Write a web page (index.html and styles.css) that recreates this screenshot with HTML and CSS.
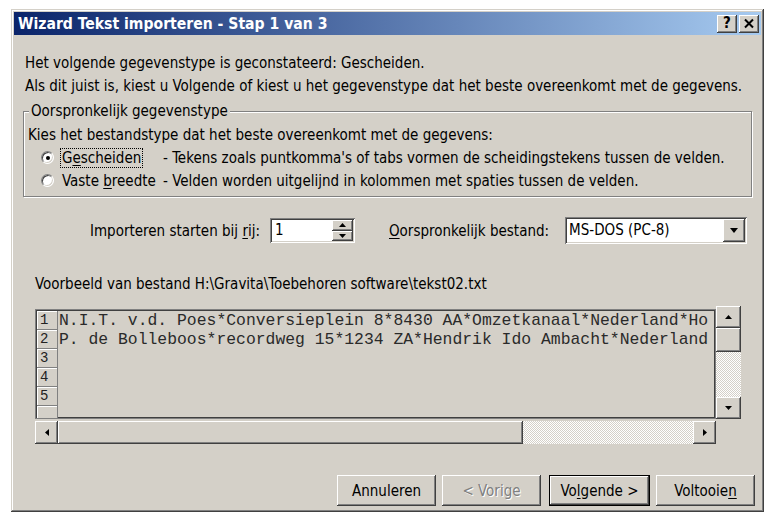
FILE: index.html
```html
<!DOCTYPE html>
<html lang="nl">
<head>
<meta charset="utf-8">
<title>Wizard Tekst importeren - Stap 1 van 3</title>
<link rel="stylesheet" href="styles.css">
</head>
<body>
<div class="window">
  <div class="titlebar">
    <span class="title">Wizard Tekst importeren - Stap 1 van 3</span>
    <div class="caption-btns">
      <button class="cap raised"><span class="cap-help">?</span></button>
      <button class="cap raised">
        <svg width="12" height="11" viewBox="0 0 12 11"><path d="M2 1.5 L10 9.5 M10 1.5 L2 9.5" stroke="#000" stroke-width="2" fill="none"/></svg>
      </button>
    </div>
  </div>

  <div class="content">
    <p class="intro first">Het volgende gegevenstype is geconstateerd: Gescheiden.</p>
    <p class="intro">Als dit juist is, kiest u Volgende of kiest u het gegevenstype dat het beste overeenkomt met de gegevens.</p>

    <fieldset class="group">
      <legend>Oorspronkelijk gegevenstype</legend>
      <div class="hint">Kies het bestandstype dat het beste overeenkomt met de gegevens:</div>
      <div class="choice">
        <span class="radio checked"></span>
        <span class="choice-label"><span class="focus">G<u>e</u>scheiden</span></span>
        <span class="choice-desc">- Tekens zoals puntkomma's of tabs vormen de scheidingstekens tussen de velden.</span>
      </div>
      <div class="choice">
        <span class="radio"></span>
        <span class="choice-label"><span class="nofocus">Vaste <u>b</u>reedte</span></span>
        <span class="choice-desc">- Velden worden uitgelijnd in kolommen met spaties tussen de velden.</span>
      </div>
    </fieldset>

    <div class="import-row">
      <span class="field-label">Importeren starten bij <u>r</u>ij:</span>
      <div class="spin sunken">
        <span class="spin-value">1</span>
        <div class="spin-btns">
          <span class="spin-btn raised"><svg width="7" height="4" viewBox="0 0 7 4"><path d="M3.5 0 L7 4 L0 4 Z" fill="#000"/></svg></span>
          <span class="spin-btn raised"><svg width="7" height="4" viewBox="0 0 7 4"><path d="M0 0 L7 0 L3.5 4 Z" fill="#000"/></svg></span>
        </div>
      </div>
      <span class="field-label origin"><u>O</u>orspronkelijk bestand:</span>
      <div class="combo sunken">
        <span class="combo-text">MS-DOS (PC-8)</span>
        <span class="combo-btn raised"><svg width="8" height="5" viewBox="0 0 8 5"><path d="M0 0 L8 0 L4 5 Z" fill="#000"/></svg></span>
      </div>
    </div>

    <div class="preview-label">Voorbeeld van bestand H:\Gravita\Toebehoren software\tekst02.txt</div>

    <div class="preview">
      <div class="sheet">
        <div class="sheet-row"><span class="rownum">1</span><span class="rowtext">N.I.T. v.d. Poes*Conversieplein 8*8430 AA*Omzetkanaal*Nederland*Ho</span></div>
        <div class="sheet-row"><span class="rownum">2</span><span class="rowtext">P. de Bolleboos*recordweg 15*1234 ZA*Hendrik Ido Ambacht*Nederland</span></div>
        <div class="sheet-row"><span class="rownum">3</span><span class="rowtext"></span></div>
        <div class="sheet-row"><span class="rownum">4</span><span class="rowtext"></span></div>
        <div class="sheet-row"><span class="rownum">5</span><span class="rowtext"></span></div>
        <div class="sheet-row"><span class="rownum"></span><span class="rowtext"></span></div>
      </div>

      <div class="vscroll">
        <span class="sb-btn raised"><svg width="7" height="4" viewBox="0 0 7 4"><path d="M3.5 0 L7 4 L0 4 Z" fill="#000"/></svg></span>
        <span class="sb-thumb-v raised"></span>
        <span class="sb-track"></span>
        <span class="sb-btn raised"><svg width="7" height="4" viewBox="0 0 7 4"><path d="M0 0 L7 0 L3.5 4 Z" fill="#000"/></svg></span>
      </div>

      <div class="hscroll">
        <span class="sb-btn-h raised"><svg width="4" height="7" viewBox="0 0 4 7"><path d="M4 0 L4 7 L0 3.5 Z" fill="#000"/></svg></span>
        <span class="sb-thumb-h raised"></span>
        <span class="sb-track"></span>
        <span class="sb-btn-h raised"><svg width="4" height="7" viewBox="0 0 4 7"><path d="M0 0 L4 3.5 L0 7 Z" fill="#000"/></svg></span>
      </div>
    </div>

    <div class="actions">
      <button class="btn raised">Annuleren</button>
      <button class="btn raised disabled">&lt; Vorige</button>
      <button class="btn raised default">Vo<u>l</u>gende &gt;</button>
      <button class="btn raised">Voltooie<u>n</u></button>
    </div>
  </div>
</div>
</body>
</html>
```

FILE: styles.css
```css
* {
  box-sizing: border-box;
}

html,
body {
  margin: 0;
  background: #fff;
}

body {
  font-family: "DejaVu Sans Condensed", "DejaVu Sans", sans-serif;
  font-stretch: condensed;
  font-size: 15px;
  color: #000;
}

u {
  text-decoration-thickness: 1px;
  text-underline-offset: 2px;
}

/* 3D bevels of the classic theme */
.raised {
  background: #d4d0c8;
  box-shadow: inset -1px -1px #404040, inset 1px 1px #fff,
    inset -2px -2px #808080, inset 2px 2px #d4d0c8;
}

.sunken {
  background: #fff;
  box-shadow: inset 1px 1px #808080, inset -1px -1px #fff,
    inset 2px 2px #404040, inset -2px -2px #d4d0c8;
}

button {
  font: inherit;
  color: inherit;
  border: 0;
  padding: 0;
  margin: 0;
}

/* dialog frame */
.window {
  margin: 9px 0 0 11px;
  width: 753px;
  height: 503px;
  padding: 3px;
  background: #d4d0c8;
  box-shadow: inset -1px -1px #404040, inset 1px 1px #d4d0c8,
    inset -2px -2px #808080, inset 2px 2px #fff;
  display: flex;
  flex-direction: column;
}

.titlebar {
  flex: none;
  height: 23px;
  display: flex;
  align-items: center;
  justify-content: space-between;
  padding: 0 2px 0 4px;
  background: linear-gradient(to right, #0a246a, #a6caf0);
}

.title {
  color: #fff;
  font-weight: bold;
  font-size: 15.6px;
}

.caption-btns {
  display: flex;
  gap: 2px;
}

.cap {
  width: 20px;
  height: 18px;
  display: flex;
  align-items: center;
  justify-content: center;
}

.cap-help {
  font-weight: bold;
  font-size: 15px;
  line-height: 1;
}

.content {
  flex: 1;
  display: flex;
  flex-direction: column;
  padding: 0 9px 0 11px;
}

.intro {
  margin: 0;
  line-height: 23px;
  white-space: nowrap;
}

.intro.first {
  margin-top: 17px;
}

/* group box with etched border */
.group {
  margin: 5px 0 0 -2px;
  padding: 5px 0 4px 4px;
  border: 1px solid #808080;
  box-shadow: inset 1px 1px #fff, 1px 1px #fff;
  min-width: 0;
}

.group legend {
  margin-left: 1px;
  padding: 0 2px;
  line-height: 16px;
  background: #d4d0c8;
}

.hint {
  line-height: 22px;
}

.choice {
  display: flex;
  align-items: center;
  height: 23px;
  white-space: nowrap;
}

.radio {
  flex: none;
  position: relative;
  width: 13px;
  height: 13px;
  margin: 0 8px 0 13px;
  border-radius: 50%;
  border: 1px solid;
  border-color: #808080 #fff #fff #808080;
  background: #fff;
  box-shadow: inset 1px 1px #404040, inset -1px -1px #d4d0c8;
}

.radio.checked::after {
  content: "";
  position: absolute;
  left: 3.5px;
  top: 3.5px;
  width: 4px;
  height: 4px;
  border-radius: 50%;
  background: #000;
}

.choice-label {
  flex: none;
  width: 101px;
}

.focus,
.nofocus {
  padding: 0 1px;
  margin-left: -1px;
}

.focus {
  outline: 1px dotted #000;
}

/* start row + file origin */
.import-row {
  display: flex;
  align-items: center;
  height: 27px;
  margin-top: 20px;
  padding-left: 65px;
  white-space: nowrap;
}

.spin {
  display: flex;
  width: 85px;
  height: 25px;
  margin-left: 10px;
  padding: 2px;
}

.spin-value {
  flex: 1;
  padding-left: 3px;
  line-height: 21px;
}

.spin-btns {
  display: flex;
  flex-direction: column;
  width: 21px;
}

.spin-btn {
  flex: 1;
  display: flex;
  align-items: center;
  justify-content: center;
}

.origin {
  margin-left: 34px;
}

.combo {
  display: flex;
  width: 182px;
  height: 27px;
  margin-left: 16px;
  padding: 2px;
}

.combo-text {
  flex: 1;
  padding-left: 2px;
  line-height: 23px;
}

.combo-btn {
  width: 22px;
  display: flex;
  align-items: center;
  justify-content: center;
}

.preview-label {
  margin-top: 30px;
  padding-left: 10px;
  line-height: 20px;
  white-space: nowrap;
}

/* preview grid with scrollbars */
.preview {
  margin: 12px 0 0 10px;
  display: grid;
  grid-template-columns: 681px 25px;
  grid-template-rows: 115px 23px;
}

.sheet {
  margin-top: 3px;
  margin-bottom: 2px;
  border: 1px solid #808080;
  box-shadow: inset 1px 1px #404040, inset -1px -1px #404040;
  padding: 1px;
  overflow: hidden;
}

.sheet-row {
  display: flex;
  height: 19px;
}

.rownum {
  flex: none;
  width: 21px;
  height: 19px;
  padding-left: 3px;
  font-family: "Liberation Mono", monospace;
  font-size: 14px;
  line-height: 18px;
  color: #222;
  background: #d4d0c8;
  box-shadow: inset -1px -1px #808080, inset 1px 1px #fff;
}

.rowtext {
  flex: 1;
  overflow: hidden;
  white-space: pre;
  padding-left: 1px;
  font-family: "Liberation Mono", monospace;
  font-size: 16.4px;
  line-height: 19px;
  color: #2a2a2a;
}

.vscroll {
  grid-column: 2;
  grid-row: 1;
  display: flex;
  flex-direction: column;
  height: 113px;
}

.sb-btn {
  flex: none;
  height: 22px;
  display: flex;
  align-items: center;
  justify-content: center;
}

.sb-thumb-v {
  flex: none;
  height: 24px;
}

.sb-track {
  flex: 1;
  background: repeating-conic-gradient(#fff 0 25%, #d4d0c8 0 50%) 0 0 / 2px 2px;
}

.hscroll {
  grid-column: 1;
  grid-row: 2;
  display: flex;
}

.sb-btn-h {
  flex: none;
  width: 23px;
  display: flex;
  align-items: center;
  justify-content: center;
}

.sb-thumb-h {
  flex: none;
  width: 465px;
}

/* dialog buttons */
.actions {
  display: flex;
  justify-content: flex-end;
  gap: 6px;
  margin: 31px -3px 0 0;
}

.btn {
  width: 99px;
  height: 31px;
  white-space: nowrap;
}

.btn.disabled {
  color: #808080;
  text-shadow: 1px 1px #fff;
}

.btn.default {
  width: 101px;
  margin: 0 0 0 2px;
  box-shadow: inset 1px 1px #000, inset -1px -1px #000,
    inset -2px -2px #404040, inset 2px 2px #fff,
    inset -3px -3px #808080;
}
```
